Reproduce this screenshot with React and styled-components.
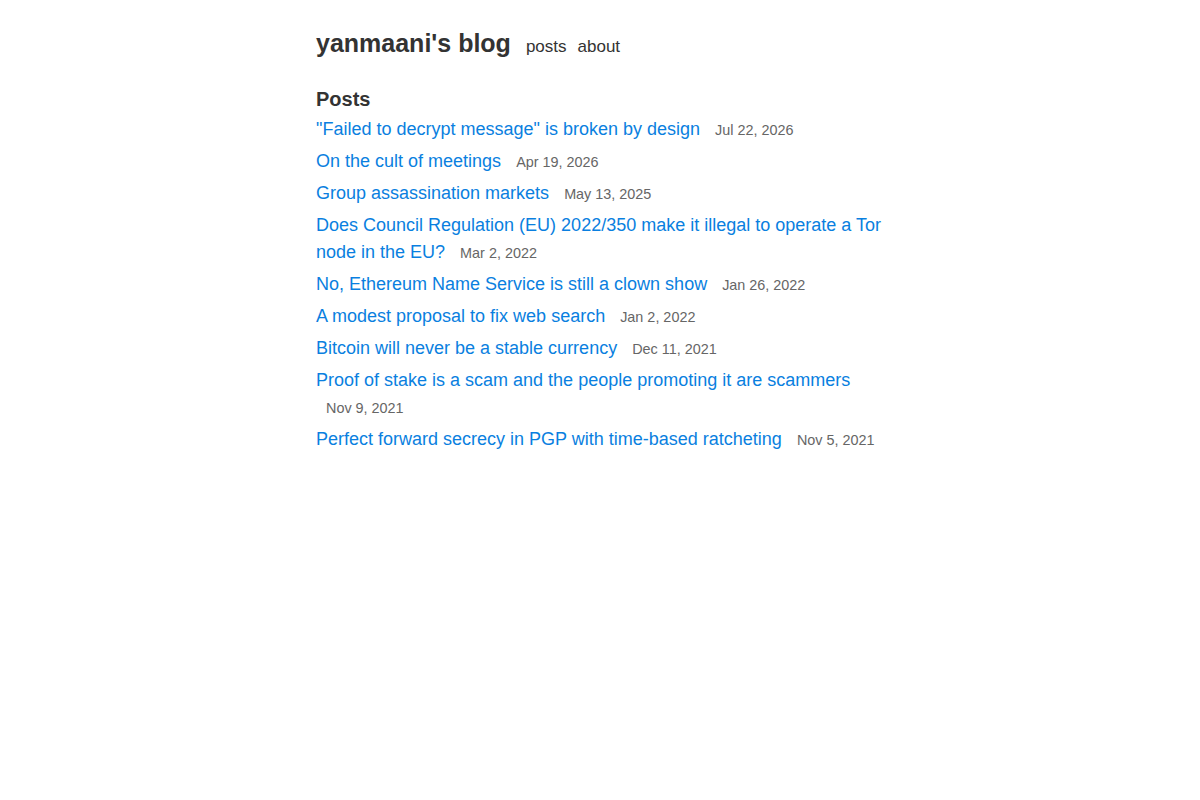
import styled, { createGlobalStyle } from "styled-components";

const posts = [
	{ title: "\"Failed to decrypt message\" is broken by design", date: "Jul 22, 2026" },
	{ title: "On the cult of meetings", date: "Apr 19, 2026" },
	{ title: "Group assassination markets", date: "May 13, 2025" },
	{ title: "Does Council Regulation (EU) 2022/350 make it illegal to operate a Tor node in the EU?", date: "Mar 2, 2022" },
	{ title: "No, Ethereum Name Service is still a clown show", date: "Jan 26, 2022" },
	{ title: "A modest proposal to fix web search", date: "Jan 2, 2022" },
	{ title: "Bitcoin will never be a stable currency", date: "Dec 11, 2021" },
	{ title: "Proof of stake is a scam and the people promoting it are scammers", date: "Nov 9, 2021" },
	{ title: "Perfect forward secrecy in PGP with time-based ratcheting", date: "Nov 5, 2021" },
];

const App = () => {
	return (
		<>
			<GlobalStyle />
			<Page>
				<Header>
					<BlogTitle href="#">yanmaani's blog</BlogTitle>
					<Nav>
						<NavLink href="#">posts</NavLink>
						<NavLink href="#">about</NavLink>
					</Nav>
				</Header>
				<Heading>Posts</Heading>
				<PostList>
					{posts.map((post) => (
						<PostItem key={post.title}>
							<PostLink href="#">{post.title}</PostLink>{" "}
							<PostDate>{post.date}</PostDate>
						</PostItem>
					))}
				</PostList>
			</Page>
		</>
	);
};

const GlobalStyle = createGlobalStyle`
	body {
		margin: 0;
		background: #fff;
		color: #333;
		font-family: "Liberation Sans", Arial, sans-serif;
	}
`;

const Page = styled.main`
	max-width: 568px;
	margin: 0 auto;
	padding: 23px 16px;
`;

const Header = styled.header`
	display: flex;
	align-items: baseline;
	gap: 15px;
	margin-bottom: 24px;
`;

const BlogTitle = styled.a`
	font-size: 25px;
	font-weight: 700;
	line-height: 40px;
	color: #333;
	text-decoration: none;
`;

const Nav = styled.nav`
	display: flex;
	gap: 11px;
`;

const NavLink = styled.a`
	font-size: 17px;
	color: #333;
	text-decoration: none;
`;

const Heading = styled.h2`
	font-size: 20px;
	font-weight: 700;
	line-height: 24px;
	margin: 0 0 5px;
	color: #333;
`;

const PostList = styled.ul`
	list-style: none;
	margin: 0;
	padding: 0;
`;

const PostItem = styled.li`
	font-size: 18px;
	line-height: 27px;
	margin-bottom: 5px;
`;

const PostLink = styled.a`
	color: #0a7fe0;
	text-decoration: none;
`;

const PostDate = styled.span`
	margin-left: 10px;
	font-size: 0.8em;
	line-height: 1;
	color: #666;
`;

export default App;
